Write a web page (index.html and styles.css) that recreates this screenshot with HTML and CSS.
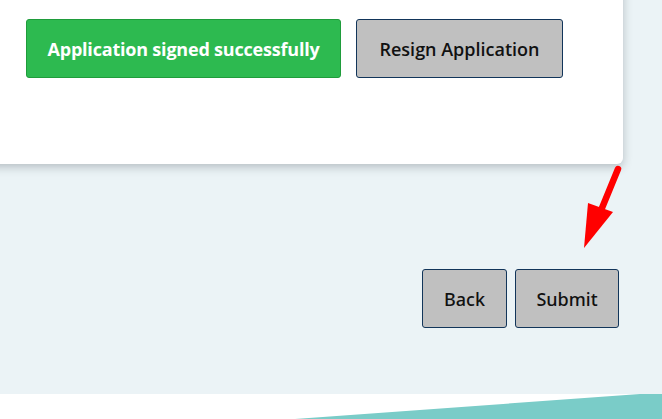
FILE: index.html
```html
<!DOCTYPE html>
<html>
<head>
<meta charset="utf-8">
<link rel="stylesheet" href="styles.css">
</head>
<body>
<div class="page">
  <main class="main">
    <section class="card">
      <div class="sign-row">
        <button class="btn btn-success">Application signed successfully</button>
        <button class="btn btn-resign">Resign Application</button>
      </div>
    </section>
    <div class="actions">
      <button class="btn btn-nav">Back</button>
      <button class="btn btn-nav">Submit</button>
    </div>
    <svg class="arrow" width="50" height="90" viewBox="0 0 50 90">
      <line x1="44" y1="9" x2="28" y2="48" stroke="#ff0000" stroke-width="6.5" stroke-linecap="round"/>
      <polygon points="14,43 39,52 10,88" fill="#ff0000"/>
    </svg>
  </main>
  <footer class="footer">
    <svg class="wedge" viewBox="0 0 662 25" preserveAspectRatio="none">
      <polygon points="640,0 662,0 662,25 295,25" fill="#7accc8"/>
    </svg>
  </footer>
</div>
</body>
</html>
```
FILE: styles.css
```css
* { box-sizing: border-box; }
html, body { margin: 0; padding: 0; }
body {
  width: 662px;
  height: 419px;
  overflow: hidden;
  background: #ffffff;
  font-family: "Open Sans", "Noto Sans", sans-serif;
}
.page {
  display: flex;
  flex-direction: column;
  height: 419px;
}
.main {
  position: relative;
  height: 394px;
  background: #ebf3f6;
  display: flex;
  flex-direction: column;
}
.card {
  margin: -20px 0 0 -20px;
  width: 643px;
  height: 184px;
  background: #ffffff;
  border-radius: 0 0 6px 0;
  box-shadow: 0 3px 10px rgba(40, 50, 60, 0.28);
  padding: 39px 0 0 46px;
}
.sign-row {
  display: flex;
  gap: 15px;
}
.btn {
  height: 59px;
  border-radius: 3px;
  font-size: 18px;
  padding: 0;
  cursor: pointer;
}
.btn-success {
  width: 315px;
  background: #2dba50;
  border: 1px solid #1f9c3b;
  color: #ffffff;
  font-weight: 700;
  font-family: "Open Sans", sans-serif;
  letter-spacing: -0.2px;
}
.btn-resign {
  width: 207px;
  background: #c0c0c0;
  border: 1px solid #12355a;
  color: #111111;
  font-weight: 600;
  font-family: "Open Sans", sans-serif;
}
.actions {
  display: flex;
  justify-content: flex-end;
  gap: 8px;
  margin-top: 105px;
  padding-right: 43px;
}
.btn-nav {
  background: #c0c0c0;
  border: 1px solid #12355a;
  color: #111111;
  font-family: "Noto Sans", sans-serif;
  font-size: 18px;
  font-weight: 500;
}
.btn-nav:first-child { width: 85px; }
.btn-nav:last-child { width: 104px; }
.arrow {
  position: absolute;
  left: 574px;
  top: 160px;
}
.footer {
  height: 25px;
  background: #ffffff;
}
.wedge {
  display: block;
  width: 100%;
  height: 25px;
}
```
